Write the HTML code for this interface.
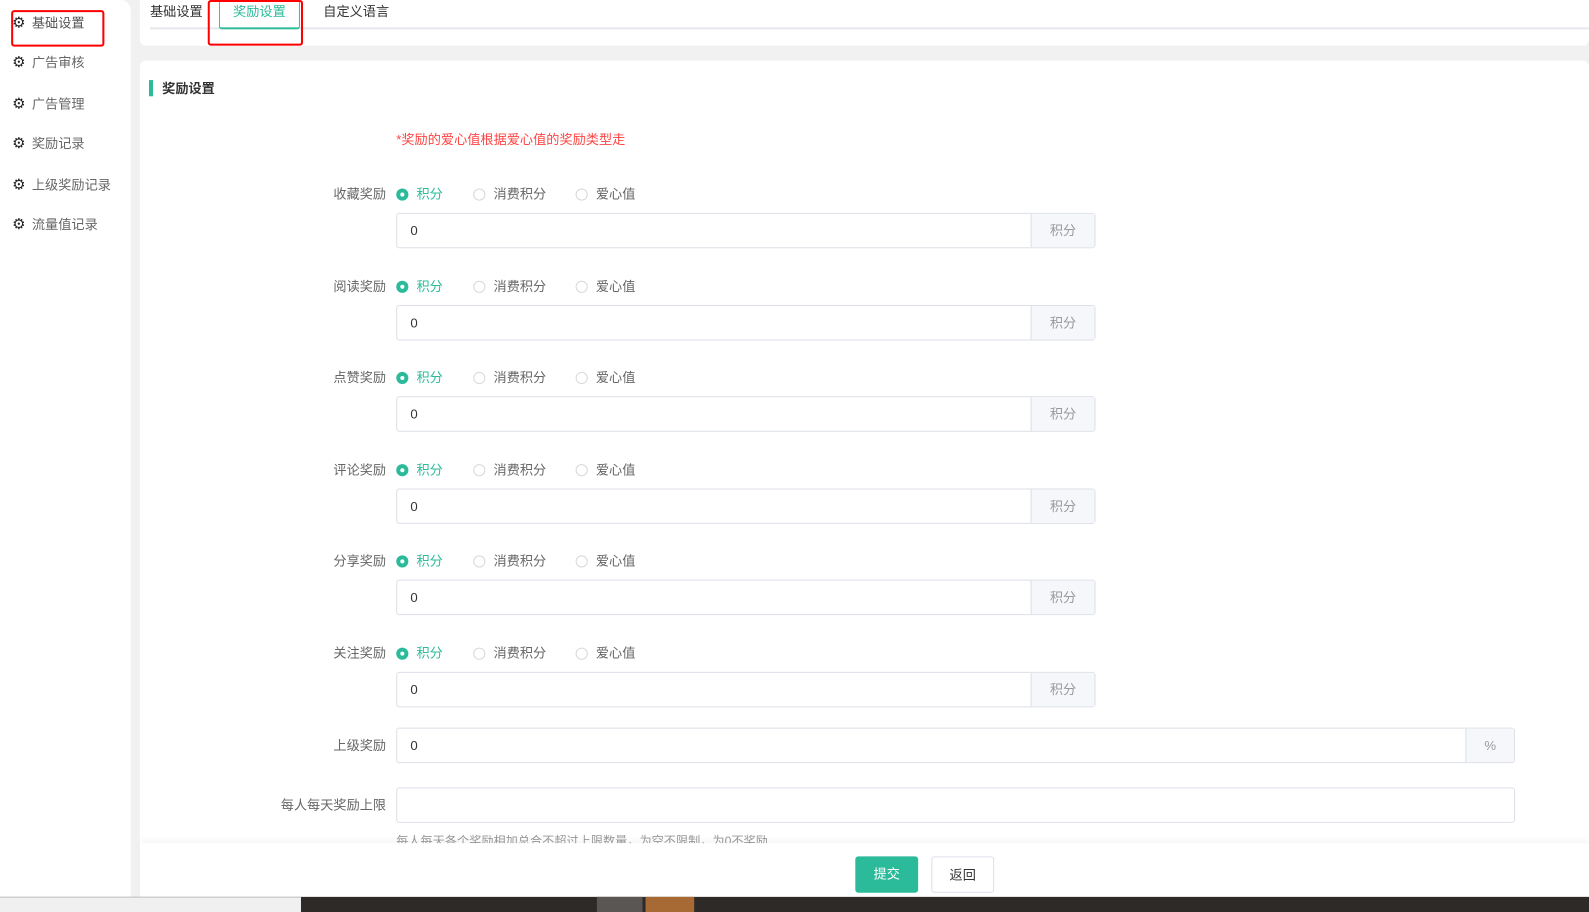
<!DOCTYPE html>
<html><head><meta charset="utf-8"><style>
*{box-sizing:border-box;margin:0;padding:0}
body{width:1589px;height:900px;overflow:hidden;background:#f1f1f1;font-family:"Liberation Sans","Noto Sans CJK SC",sans-serif;font-size:13px;color:#555;position:relative}
#w{position:absolute;left:0;top:0;width:1568px;height:888px;transform:scale(1.0134);transform-origin:0 0}
.side{position:absolute;left:0;top:0;width:129px;height:886px;background:#fff;border-top-right-radius:10px}
.side div{position:absolute;left:12px;height:20px;line-height:20px;color:#666;font-size:13px}
.side b{color:#222;font-size:15px;font-weight:normal;margin-right:6px}
.top{position:absolute;left:138px;top:0;width:1430px;height:45px;background:#fff;border-radius:0 0 6px 6px}
.tabs{position:absolute;left:10px;right:0;top:0;height:29px;border-bottom:2px solid #e6e8ec}
.tab{position:absolute;top:0;font-size:13px;color:#333}
.main{position:absolute;left:138px;top:60px;width:1430px;height:830px;background:#fff;border-radius:6px}
.lbl{position:absolute;font-size:13px;color:#666;text-align:right;width:200px}
.r{position:absolute;font-size:13px}
.rd{display:inline-block;width:12px;height:12px;border:1px solid #d8d8d8;border-radius:50%;vertical-align:-2px;margin-right:8px;background:#fff}
.rd.on{border-color:#2bbb9a;background:#2bbb9a;position:relative}
.rd.on:after{content:"";position:absolute;left:3px;top:3px;width:4px;height:4px;background:#fff;border-radius:50%}
.in{position:absolute;height:35px;border:1px solid #dcdfe6;border-radius:3px;background:#fff;font-size:13px;color:#333;line-height:33px;padding-left:13px}
.ad{position:absolute;right:0;top:0;bottom:0;width:63px;background:#f5f7fa;border-left:1px solid #dcdfe6;text-align:center;color:#999}
.foot{position:absolute;left:138px;top:832px;width:1430px;height:54px;background:#fff;box-shadow:0 -3px 6px rgba(0,0,0,.04)}
.btn{position:absolute;top:13px;height:36px;line-height:36px;text-align:center;font-size:13px;border-radius:3px}
</style></head><body><div id="w">
<div class="side">
<div style="top:13px;color:#555"><b>⚙</b>基础设置</div>
<div style="top:52px"><b>⚙</b>广告审核</div>
<div style="top:93px"><b>⚙</b>广告管理</div>
<div style="top:132px"><b>⚙</b>奖励记录</div>
<div style="top:173px"><b>⚙</b>上级奖励记录</div>
<div style="top:212px"><b>⚙</b>流量值记录</div>
</div>
<div style="position:absolute;left:11px;top:10px;width:92px;height:36px;border:2px solid #f00;border-radius:3px"></div>
<div class="top"><div class="tabs">
<div class="tab" style="left:0;top:1px">基础设置</div>
<div class="tab" style="left:68px;width:80px;height:29px;border:1px solid #2bbb9a;border-top:none;border-bottom:2px solid #2bbb9a;border-radius:0 0 3px 3px;color:#2bbb9a;text-align:center;top:0;padding-top:1px">奖励设置</div>
<div class="tab" style="left:171px;top:1px">自定义语言</div>
</div></div>
<div style="position:absolute;left:205px;top:0;width:94px;height:45px;border:2px solid #f00;border-radius:3px"></div>
<div class="main">
<div style="position:absolute;left:9px;top:19px;width:4px;height:16px;background:#2bbb9a"></div>
<div style="position:absolute;left:22px;top:17px;font-size:13px;color:#333;font-weight:bold">奖励设置</div>
<div style="position:absolute;left:253px;top:67px;color:#f44;font-size:13px">*奖励的爱心值根据爱心值的奖励类型走</div>
</div>
<div id="rows"></div>
<div class="lbl" style="left:181px;top:725px">上级奖励</div>
<div class="in" style="left:391px;top:718px;width:1104px">0<div class="ad" style="width:48px">%</div></div>
<div class="lbl" style="left:181px;top:784px">每人每天奖励上限</div>
<div class="in" style="left:391px;top:777px;width:1104px"></div>
<div style="position:absolute;left:391px;top:821px;font-size:12px;color:#999">每人每天各个奖励相加总合不超过上限数量，为空不限制，为0不奖励</div>
<div class="foot">
<div class="btn" style="left:706px;width:62px;background:#2bbb9a;color:#fff">提交</div>
<div class="btn" style="left:781px;width:62px;border:1px solid #dcdfe6;color:#333;background:#fff">返回</div>
</div>
<div style="position:absolute;left:0;top:885px;width:1568px;height:15px;background:#2e2a28"></div>
<div style="position:absolute;left:0;top:885px;width:297px;height:15px;background:#f0f0f0;border-top:1px solid #ccc"></div>
<div style="position:absolute;left:589px;top:885px;width:45px;height:15px;background:#5a5654"></div>
<div style="position:absolute;left:637px;top:885px;width:48px;height:15px;background:#a86a34"></div>
</div>
<script>
var L=["收藏奖励","阅读奖励","点赞奖励","评论奖励","分享奖励","关注奖励"],h="";
L.forEach(function(t,i){var y=181+i*90.5;
h+='<div class="lbl" style="left:181px;top:'+y+'px">'+t+'</div>';
h+='<div class="r" style="left:391px;top:'+y+'px;color:#2bbb9a"><span class="rd on"></span>积分</div>';
h+='<div class="r" style="left:467px;top:'+y+'px;color:#666"><span class="rd"></span>消费积分</div>';
h+='<div class="r" style="left:568px;top:'+y+'px;color:#666"><span class="rd"></span>爱心值</div>';
h+='<div class="in" style="left:391px;top:'+(y+29)+'px;width:690px">0<div class="ad">积分</div></div>';});
document.getElementById("rows").innerHTML=h;
</script>
</body></html>
